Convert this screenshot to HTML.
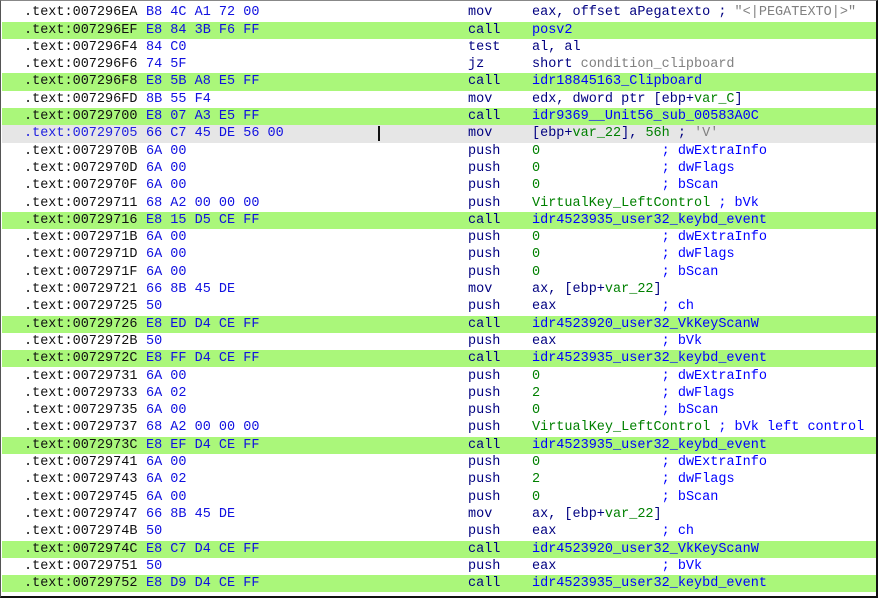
<!DOCTYPE html>
<html><head><meta charset="utf-8"><style>
html,body{margin:0;padding:0;background:#fff;}
#f{position:relative;width:878px;height:598px;overflow:hidden;background:#fff;box-sizing:border-box;border-top:1px solid #888;border-left:1px solid #555;border-right:2px solid #111;border-bottom:2px solid #111;}
.r{position:absolute;left:1px;right:0;height:17.3px;font-family:"Liberation Mono",monospace;font-size:13.5px;line-height:17.3px;white-space:pre;}
.g{background:#aaf77a;}
.h{background:#e6e6e6;}
.r > span{position:absolute;top:0;}
.a{left:22px;color:#111;}
.b{left:144px;color:#1010e0;}
.m{left:466px;color:#000080;}
.o{left:530px;color:#000080;}
.n{color:#0000ff}
.k{color:#008000}
.c{color:#0000ff}
.s{color:#808080}
.ab{color:#2020e0}
#cur{position:absolute;left:377px;top:125px;width:2px;height:15px;background:#111;}
</style></head><body><div id="f">
<div class="r" style="top:3.2px"><span class="a">.text:007296EA</span><span class="b">B8 4C A1 72 00</span><span class="m">mov</span><span class="o">eax, offset aPegatexto ; <span class="s">"&lt;|PEGATEXTO|&gt;"</span></span></div>
<div class="r g" style="top:20.5px"><span class="a">.text:007296EF</span><span class="b">E8 84 3B F6 FF</span><span class="m">call</span><span class="o"><span class="n">posv2</span></span></div>
<div class="r" style="top:37.8px"><span class="a">.text:007296F4</span><span class="b">84 C0</span><span class="m">test</span><span class="o">al, al</span></div>
<div class="r" style="top:55.1px"><span class="a">.text:007296F6</span><span class="b">74 5F</span><span class="m">jz</span><span class="o">short <span class="s">condition_clipboard</span></span></div>
<div class="r g" style="top:72.4px"><span class="a">.text:007296F8</span><span class="b">E8 5B A8 E5 FF</span><span class="m">call</span><span class="o"><span class="n">idr18845163_Clipboard</span></span></div>
<div class="r" style="top:89.7px"><span class="a">.text:007296FD</span><span class="b">8B 55 F4</span><span class="m">mov</span><span class="o">edx, dword ptr [ebp+<span class="k">var_C</span>]</span></div>
<div class="r g" style="top:107.0px"><span class="a">.text:00729700</span><span class="b">E8 07 A3 E5 FF</span><span class="m">call</span><span class="o"><span class="n">idr9369__Unit56_sub_00583A0C</span></span></div>
<div class="r h" style="top:124.3px"><span class="a ab">.text:00729705</span><span class="b">66 C7 45 DE 56 00</span><span class="m">mov</span><span class="o">[ebp+<span class="k">var_22</span>], <span class="k">56h</span> ; <span class="s">'V'</span></span></div>
<div class="r" style="top:141.6px"><span class="a">.text:0072970B</span><span class="b">6A 00</span><span class="m">push</span><span class="o"><span class="k">0</span>               <span class="c">; dwExtraInfo</span></span></div>
<div class="r" style="top:158.9px"><span class="a">.text:0072970D</span><span class="b">6A 00</span><span class="m">push</span><span class="o"><span class="k">0</span>               <span class="c">; dwFlags</span></span></div>
<div class="r" style="top:176.2px"><span class="a">.text:0072970F</span><span class="b">6A 00</span><span class="m">push</span><span class="o"><span class="k">0</span>               <span class="c">; bScan</span></span></div>
<div class="r" style="top:193.5px"><span class="a">.text:00729711</span><span class="b">68 A2 00 00 00</span><span class="m">push</span><span class="o"><span class="k">VirtualKey_LeftControl</span> <span class="c">; bVk</span></span></div>
<div class="r g" style="top:210.8px"><span class="a">.text:00729716</span><span class="b">E8 15 D5 CE FF</span><span class="m">call</span><span class="o"><span class="n">idr4523935_user32_keybd_event</span></span></div>
<div class="r" style="top:228.1px"><span class="a">.text:0072971B</span><span class="b">6A 00</span><span class="m">push</span><span class="o"><span class="k">0</span>               <span class="c">; dwExtraInfo</span></span></div>
<div class="r" style="top:245.4px"><span class="a">.text:0072971D</span><span class="b">6A 00</span><span class="m">push</span><span class="o"><span class="k">0</span>               <span class="c">; dwFlags</span></span></div>
<div class="r" style="top:262.7px"><span class="a">.text:0072971F</span><span class="b">6A 00</span><span class="m">push</span><span class="o"><span class="k">0</span>               <span class="c">; bScan</span></span></div>
<div class="r" style="top:280.0px"><span class="a">.text:00729721</span><span class="b">66 8B 45 DE</span><span class="m">mov</span><span class="o">ax, [ebp+<span class="k">var_22</span>]</span></div>
<div class="r" style="top:297.3px"><span class="a">.text:00729725</span><span class="b">50</span><span class="m">push</span><span class="o">eax             <span class="c">; ch</span></span></div>
<div class="r g" style="top:314.6px"><span class="a">.text:00729726</span><span class="b">E8 ED D4 CE FF</span><span class="m">call</span><span class="o"><span class="n">idr4523920_user32_VkKeyScanW</span></span></div>
<div class="r" style="top:331.9px"><span class="a">.text:0072972B</span><span class="b">50</span><span class="m">push</span><span class="o">eax             <span class="c">; bVk</span></span></div>
<div class="r g" style="top:349.2px"><span class="a">.text:0072972C</span><span class="b">E8 FF D4 CE FF</span><span class="m">call</span><span class="o"><span class="n">idr4523935_user32_keybd_event</span></span></div>
<div class="r" style="top:366.5px"><span class="a">.text:00729731</span><span class="b">6A 00</span><span class="m">push</span><span class="o"><span class="k">0</span>               <span class="c">; dwExtraInfo</span></span></div>
<div class="r" style="top:383.8px"><span class="a">.text:00729733</span><span class="b">6A 02</span><span class="m">push</span><span class="o"><span class="k">2</span>               <span class="c">; dwFlags</span></span></div>
<div class="r" style="top:401.1px"><span class="a">.text:00729735</span><span class="b">6A 00</span><span class="m">push</span><span class="o"><span class="k">0</span>               <span class="c">; bScan</span></span></div>
<div class="r" style="top:418.4px"><span class="a">.text:00729737</span><span class="b">68 A2 00 00 00</span><span class="m">push</span><span class="o"><span class="k">VirtualKey_LeftControl</span> <span class="c">; bVk left control</span></span></div>
<div class="r g" style="top:435.7px"><span class="a">.text:0072973C</span><span class="b">E8 EF D4 CE FF</span><span class="m">call</span><span class="o"><span class="n">idr4523935_user32_keybd_event</span></span></div>
<div class="r" style="top:453.0px"><span class="a">.text:00729741</span><span class="b">6A 00</span><span class="m">push</span><span class="o"><span class="k">0</span>               <span class="c">; dwExtraInfo</span></span></div>
<div class="r" style="top:470.3px"><span class="a">.text:00729743</span><span class="b">6A 02</span><span class="m">push</span><span class="o"><span class="k">2</span>               <span class="c">; dwFlags</span></span></div>
<div class="r" style="top:487.6px"><span class="a">.text:00729745</span><span class="b">6A 00</span><span class="m">push</span><span class="o"><span class="k">0</span>               <span class="c">; bScan</span></span></div>
<div class="r" style="top:504.9px"><span class="a">.text:00729747</span><span class="b">66 8B 45 DE</span><span class="m">mov</span><span class="o">ax, [ebp+<span class="k">var_22</span>]</span></div>
<div class="r" style="top:522.2px"><span class="a">.text:0072974B</span><span class="b">50</span><span class="m">push</span><span class="o">eax             <span class="c">; ch</span></span></div>
<div class="r g" style="top:539.5px"><span class="a">.text:0072974C</span><span class="b">E8 C7 D4 CE FF</span><span class="m">call</span><span class="o"><span class="n">idr4523920_user32_VkKeyScanW</span></span></div>
<div class="r" style="top:556.8px"><span class="a">.text:00729751</span><span class="b">50</span><span class="m">push</span><span class="o">eax             <span class="c">; bVk</span></span></div>
<div class="r g" style="top:574.1px"><span class="a">.text:00729752</span><span class="b">E8 D9 D4 CE FF</span><span class="m">call</span><span class="o"><span class="n">idr4523935_user32_keybd_event</span></span></div>
<div id="cur"></div>
</div></body></html>
